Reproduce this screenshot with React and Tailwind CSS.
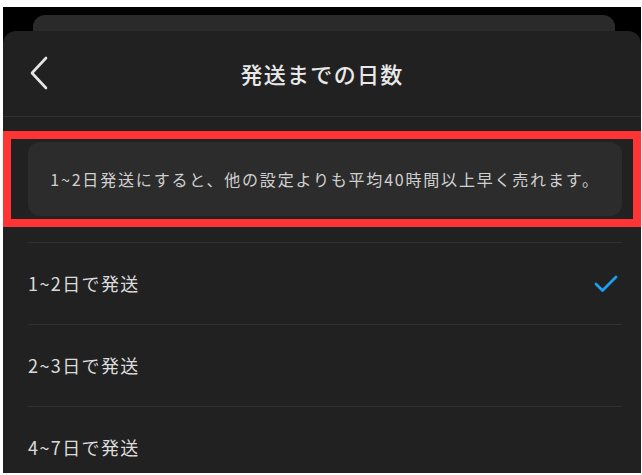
import React from "react";

const font = { fontFamily: '"Noto Sans CJK JP", "Noto Sans", sans-serif' };

const options = [
  { label: "1~2日で発送", checked: true },
  { label: "2~3日で発送", checked: false },
  { label: "4~7日で発送", checked: false },
];

const BackIcon = () => (
  <svg width="20" height="34" viewBox="0 0 20 34" fill="none">
    <path d="M17 2 L3 17 L17 32" stroke="#e6e6e6" strokeWidth="2.6" strokeLinecap="round" strokeLinejoin="round" />
  </svg>
);

const Check = () => (
  <svg width="24" height="20" viewBox="0 0 24 20" fill="none">
    <path d="M2 10 L8.5 16.5 L22 3" stroke="#1a9ff2" strokeWidth="2.8" strokeLinecap="round" strokeLinejoin="round" />
  </svg>
);

export default function App() {
  return (
    <div className="w-[642px] h-[475px] bg-white pt-[7px] pl-[3px] pr-[1px] pb-[2px] overflow-hidden" style={font}>
      <div className="h-full bg-black flex flex-col overflow-hidden">
        <div className="h-[16px] mt-[8px] ml-[30px] mr-[26px] shrink-0 bg-[#2a2a2a] rounded-t-[12px]" />
        <div className="flex-1 bg-[#212121] rounded-t-[13px] flex flex-col">
          <div className="h-[86px] flex items-center relative border-b border-[#303030] shrink-0">
            <div className="absolute left-[26px] top-[25px]">
              <BackIcon />
            </div>
            <div className="flex-1 text-center text-[22px] font-medium tracking-[1.3px] text-[#e8e8e8]">
              発送までの日数
            </div>
          </div>
          <div className="mt-[14px] h-[96px] border-[8px] border-[#ff3434] pl-[17px] pr-[11px] py-[3px] shrink-0">
            <div className="h-full bg-[#2c2c2c] rounded-[12px] flex items-center justify-center text-[16px] tracking-[1.8px] text-[#d0d0d0]">
              1~2日発送にすると、他の設定よりも平均40時間以上早く売れます。
            </div>
          </div>
          <div className="mt-[15px] ml-[25px] mr-[19px]">
            {options.map((o) => (
              <div key={o.label} className="h-[82px] border-t border-[#303030] flex items-center justify-between">
                <span className="text-[18px] tracking-[1.4px] text-[#dcdcdc]">{o.label}</span>
                {o.checked && (
                  <span className="mr-[4px]">
                    <Check />
                  </span>
                )}
              </div>
            ))}
          </div>
        </div>
      </div>
    </div>
  );
}
